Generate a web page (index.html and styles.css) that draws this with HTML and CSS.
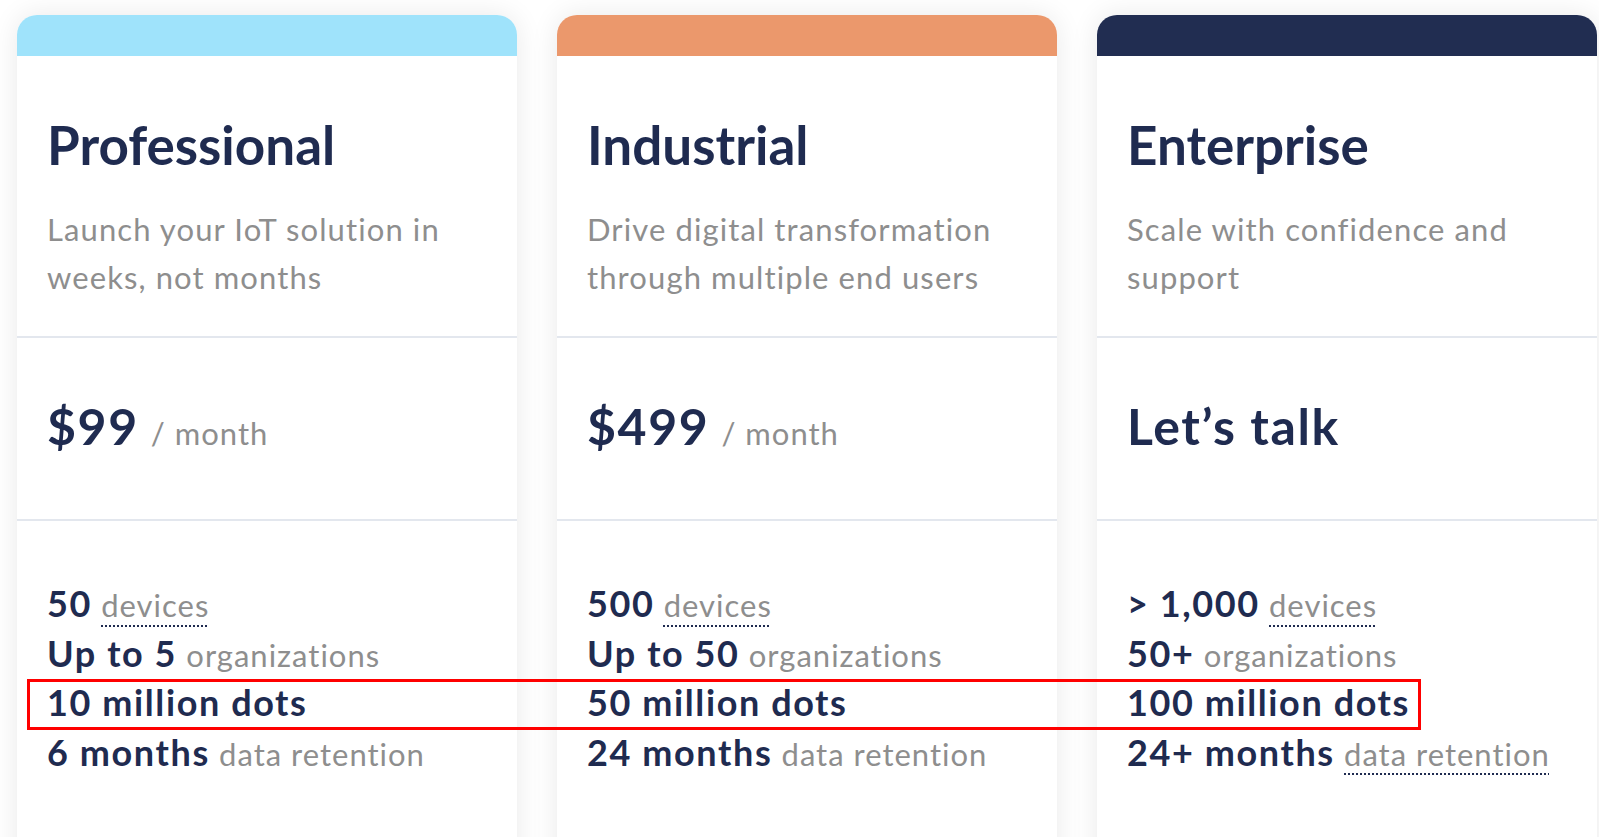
FILE: index.html
```html
<!DOCTYPE html>
<html lang="en">
<head>
<meta charset="utf-8">
<title>Pricing</title>
<link rel="stylesheet" href="styles.css">
</head>
<body>
<main class="pricing">
  <section class="card card--pro">
    <div class="card__bar"></div>
    <div class="card__head">
      <h2 class="card__title">Professional</h2>
      <p class="card__desc">Launch your IoT solution in weeks, not months</p>
    </div>
    <div class="card__price">
      <span class="price__amount">$99</span><span class="price__unit">/ month</span>
    </div>
    <ul class="card__features">
      <li><b>50</b> <span class="muted dotted">devices</span></li>
      <li><b>Up to 5</b> <span class="muted">organizations</span></li>
      <li><b>10 million dots</b></li>
      <li><b>6 months</b> <span class="muted">data retention</span></li>
    </ul>
  </section>
  <section class="card card--ind">
    <div class="card__bar"></div>
    <div class="card__head">
      <h2 class="card__title">Industrial</h2>
      <p class="card__desc">Drive digital transformation through multiple end users</p>
    </div>
    <div class="card__price">
      <span class="price__amount">$499</span><span class="price__unit">/ month</span>
    </div>
    <ul class="card__features">
      <li><b>500</b> <span class="muted dotted">devices</span></li>
      <li><b>Up to 50</b> <span class="muted">organizations</span></li>
      <li><b>50 million dots</b></li>
      <li><b>24 months</b> <span class="muted">data retention</span></li>
    </ul>
  </section>
  <section class="card card--ent">
    <div class="card__bar"></div>
    <div class="card__head">
      <h2 class="card__title">Enterprise</h2>
      <p class="card__desc">Scale with confidence and support</p>
    </div>
    <div class="card__price">
      <span class="price__amount">Let’s talk</span>
    </div>
    <ul class="card__features">
      <li><b>&gt; 1,000</b> <span class="muted dotted">devices</span></li>
      <li><b>50+</b> <span class="muted">organizations</span></li>
      <li><b>100 million dots</b></li>
      <li><b>24+ months</b> <span class="muted dotted">data retention</span></li>
    </ul>
  </section>
  <div class="highlight"></div>
</main>
</body>
</html>
```

FILE: styles.css
```css
* { box-sizing: border-box; }

html, body {
  margin: 0;
  background: #ffffff;
  overflow: hidden;
}

body {
  font-family: Lato, "Open Sans", sans-serif;
  color: #1f2b50;
  height: 837px;
}

.pricing {
  position: relative;
  display: flex;
  gap: 40px;
  padding: 15px 0 0 17px;
  align-items: flex-start;
}

.card {
  width: 500px;
  flex: 0 0 500px;
  background: #ffffff;
  border-radius: 20px 20px 0 0;
  box-shadow: 0 0 28px rgba(0, 0, 0, 0.09);
  height: 900px;
  overflow: hidden;
}

.card__bar {
  height: 41px;
}

.card--pro .card__bar { background: #9fe3fb; }
.card--ind .card__bar { background: #eb986c; }
.card--ent .card__bar { background: #212d51; }

.card__head {
  padding: 59px 30px 0 30px;
  height: 282px;
  border-bottom: 2px solid #e3e7ee;
}

.card__title {
  margin: 0;
  font-size: 53px;
  line-height: 60px;
  font-weight: 700;
  color: #1f2b50;
}

.card__desc {
  margin: 30px 0 0 0;
  font-size: 31px;
  line-height: 48px;
  font-weight: 400;
  letter-spacing: 1.1px;
  color: #8e8e8e;
}

.card__price {
  height: 183px;
  padding: 58px 30px 0 30px;
  border-bottom: 2px solid #e3e7ee;
  line-height: 60px;
}

.price__amount {
  font-size: 50px;
  font-weight: 700;
  letter-spacing: 1.6px;
  color: #1f2b50;
}

.price__unit {
  margin-left: 12px;
  font-size: 31px;
  letter-spacing: 1px;
  color: #8e8e8e;
}

.card__features {
  list-style: none;
  margin: 0;
  padding: 57px 30px 0 30px;
}

.card__features li {
  font-size: 36px;
  line-height: 50px;
  height: 49.5px;
  white-space: nowrap;
}

.card__features b {
  font-weight: 700;
  letter-spacing: 1.6px;
  color: #1f2b50;
}

.muted {
  font-size: 31px;
  letter-spacing: 1px;
  color: #8e8e8e;
}

.dotted {
  text-decoration: underline dotted #1f2b50;
  text-decoration-thickness: 2px;
  text-underline-offset: 8px;
}

.highlight {
  position: absolute;
  left: 27px;
  top: 679px;
  width: 1394px;
  height: 51px;
  border: 3px solid #ff0000;
  pointer-events: none;
}
```
